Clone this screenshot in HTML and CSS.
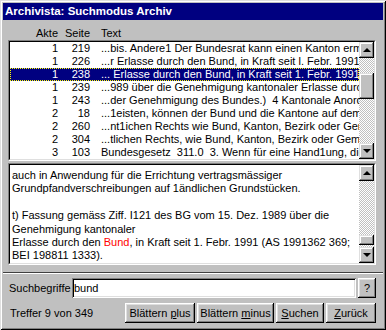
FILE: index.html
```html
<!DOCTYPE html>
<html lang="de">
<head>
    <meta charset="UTF-8">
    <title>Archivista: Suchmodus Archiv</title>
    <link rel="stylesheet" href="styles.css">
</head>
<body>
    <div class="window">
        <div class="titlebar">Archivista: Suchmodus Archiv</div>

        <div class="content">
            <div class="list-head">
                <span class="c-akte">Akte</span>
                <span class="c-seite">Seite</span>
                <span class="c-text">Text</span>
            </div>

            <div class="sunken listbox">
                <div class="sunken-in">
                    <div class="rows">
                        <div class="row"><span class="c-akte">1</span><span class="c-seite">219</span><span class="c-text">...bis. Andere1 Der Bundesrat kann einen Kanton erm</span></div>
                        <div class="row"><span class="c-akte">1</span><span class="c-seite">226</span><span class="c-text">...r Erlasse durch den Bund, in Kraft seit l. Febr. 1991 (A</span></div>
                        <div class="row selected"><span class="c-akte">1</span><span class="c-seite">238</span><span class="c-text">... Erlasse durch den Bund, in Kraft seit 1. Febr. 1991 (A</span></div>
                        <div class="row"><span class="c-akte">1</span><span class="c-seite">239</span><span class="c-text">...989 über die Genehmigung kantonaler Erlasse durch</span></div>
                        <div class="row"><span class="c-akte">1</span><span class="c-seite">243</span><span class="c-text">...der Genehmigung des Bundes.)&nbsp; 4 Kantonale Anordn</span></div>
                        <div class="row"><span class="c-akte">2</span><span class="c-seite">18</span><span class="c-text">...1eisten, können der Bund und die Kantone auf dem T</span></div>
                        <div class="row"><span class="c-akte">2</span><span class="c-seite">260</span><span class="c-text">...nt1ichen Rechts wie Bund, Kanton, Bezirk oder Gem</span></div>
                        <div class="row"><span class="c-akte">2</span><span class="c-seite">304</span><span class="c-text">...tlichen Rechts, wie Bund, Kanton, Bezirk oder Geme</span></div>
                        <div class="row"><span class="c-akte">3</span><span class="c-seite">103</span><span class="c-text">Bundesgesetz&nbsp; 311.0&nbsp; 3. Wenn für eine Hand1ung, die</span></div>
                    </div>
                    <div class="scrollbar">
                        <div class="sb-btn"><span class="arrow-up"></span></div>
                        <div class="sb-track"><div class="sb-thumb list-thumb"></div></div>
                        <div class="sb-btn"><span class="arrow-down"></span></div>
                    </div>
                </div>
            </div>

            <div class="sunken textbox">
                <div class="sunken-in">
                    <div class="text">
                        <div>auch in Anwendung für die Errichtung vertragsmässiger</div>
                        <div>Grundpfandverschreibungen auf 1ändlichen Grundstücken.</div>
                        <div>&nbsp;</div>
                        <div>t) Fassung gemäss Ziff. I121 des BG vom 15. Dez. 1989 über die</div>
                        <div>Genehmigung kantonaler</div>
                        <div>Erlasse durch den <span class="hit">Bund</span>, in Kraft seit 1. Febr. 1991 (AS 1991362 369;</div>
                        <div>BEI 198811 1333).</div>
                    </div>
                    <div class="scrollbar">
                        <div class="sb-btn"><span class="arrow-up"></span></div>
                        <div class="sb-track"><div class="sb-thumb text-thumb"></div></div>
                        <div class="sb-btn"><span class="arrow-down"></span></div>
                    </div>
                </div>
            </div>
        </div>

        <div class="separator"></div>

        <div class="content">
            <div class="search-row">
                <label for="terms">Suchbegriffe</label>
                <input type="text" id="terms" class="field" value="bund">
                <button type="button" class="btn btn-help">?</button>
            </div>

            <div class="status-row">
                <span class="hits">Treffer 9 von 349</span>
                <div class="buttons">
                    <button type="button" class="btn btn-plus">Blättern <u>p</u>lus</button>
                    <button type="button" class="btn btn-minus">Blättern <u>m</u>inus</button>
                    <button type="button" class="btn btn-search"><u>S</u>uchen</button>
                    <button type="button" class="btn btn-back"><u>Z</u>urück</button>
                </div>
            </div>
        </div>
    </div>
</body>
</html>
```

FILE: styles.css
```css
body {
    margin: 0;
    font-family: "Liberation Sans", Arial, sans-serif;
    font-size: 11px;
    color: #000;
    background: #c0c0c0;
}
.window {
    width: 386px;
    height: 330px;
    box-sizing: border-box;
    padding: 3px;
    background: #c0c0c0;
    box-shadow: inset 1px 1px #dfdfdf, inset -1px -1px #000,
                inset 2px 2px #fff, inset -2px -2px #808080;
}
.titlebar {
    height: 17px;
    line-height: 17px;
    padding-left: 2px;
    background: #000080;
    color: #fff;
    font-weight: bold;
    font-size: 11.5px;
}
.content {
    padding: 0 7px 0 5px;
}

/* list columns */
.list-head, .row {
    display: grid;
    grid-template-columns: 48px 32px 1fr;
    line-height: 13px;
    white-space: nowrap;
}
.list-head {
    height: 13px;
    padding: 7px 0 0 2px;
}
.c-akte, .c-seite {
    text-align: right;
}
.c-text {
    padding-left: 11px;
    overflow: hidden;
}
.row {
    height: 13px;
}
.row.selected {
    background: #000080;
    color: #fff;
    outline: 1px dotted #ffff00;
    outline-offset: -1px;
}

/* sunken boxes */
.sunken {
    border: 1px solid;
    border-color: #808080 #fff #fff #808080;
}
.sunken-in {
    display: flex;
    height: 100%;
    box-sizing: border-box;
    border: 1px solid;
    border-color: #000 #dfdfdf #dfdfdf #000;
    background: #fff;
}
.listbox {
    height: 121px;
    box-sizing: border-box;
}
.rows {
    flex: 1;
    min-width: 0;
    overflow: hidden;
}
.textbox {
    height: 102px;
    box-sizing: border-box;
    margin-top: 2px;
}
.text {
    flex: 1;
    min-width: 0;
    padding: 4px 0 0 2px;
    line-height: 13.4px;
    white-space: nowrap;
    overflow: hidden;
}
.hit {
    color: #ff0000;
}

/* scrollbars */
.scrollbar {
    width: 15px;
    display: flex;
    flex-direction: column;
}
.sb-btn {
    height: 16px;
    display: flex;
    align-items: center;
    justify-content: center;
    background: #c0c0c0;
    box-shadow: inset -1px -1px #000, inset 1px 1px #dfdfdf,
                inset -2px -2px #808080, inset 2px 2px #fff;
}
.arrow-up, .arrow-down {
    width: 0;
    height: 0;
    border-left: 4px solid transparent;
    border-right: 4px solid transparent;
}
.arrow-up {
    border-bottom: 4px solid #000;
}
.arrow-down {
    border-top: 4px solid #000;
}
.sb-track {
    flex: 1;
    background: repeating-conic-gradient(#c0c0c0 0 25%, #fff 0 50%) 0 0 / 2px 2px;
}
.sb-thumb {
    background: #c0c0c0;
    box-shadow: inset -1px -1px #000, inset 1px 1px #dfdfdf,
                inset -2px -2px #808080, inset 2px 2px #fff;
}
.list-thumb {
    margin-top: 15px;
    height: 26px;
}
.text-thumb {
    margin-top: 54px;
    height: 10px;
}

.separator {
    margin-top: 7px;
    border-top: 1px solid #404040;
    border-bottom: 1px solid #fff;
}

/* bottom rows */
.search-row, .status-row {
    display: flex;
    align-items: center;
    height: 20px;
}
.search-row {
    margin-top: 4px;
}
.search-row label {
    width: 63px;
    padding-left: 1px;
}
.field {
    flex: 1;
    height: 20px;
    box-sizing: border-box;
    margin: 0;
    padding: 0 2px;
    border: none;
    font: inherit;
    background: #fff;
    box-shadow: inset 1px 1px #808080, inset -1px -1px #fff,
                inset 2px 2px #000, inset -2px -2px #dfdfdf;
    outline: none;
}
.btn {
    height: 20px;
    margin: 0;
    padding: 0;
    border: none;
    font: inherit;
    color: #000;
    background: #c0c0c0;
    box-shadow: inset -1px -1px #000, inset 1px 1px #fff,
                inset -2px -2px #808080, inset 2px 2px #dfdfdf;
}
.btn-help {
    width: 18px;
    margin-left: 2px;
}
.status-row {
    margin-top: 5px;
    justify-content: space-between;
}
.hits {
    padding-left: 2px;
}
.buttons {
    display: flex;
    gap: 2px;
}
.btn-plus { width: 70px; }
.btn-minus { width: 77px; }
.btn-search { width: 48px; }
.btn-back { width: 50px; }
```
